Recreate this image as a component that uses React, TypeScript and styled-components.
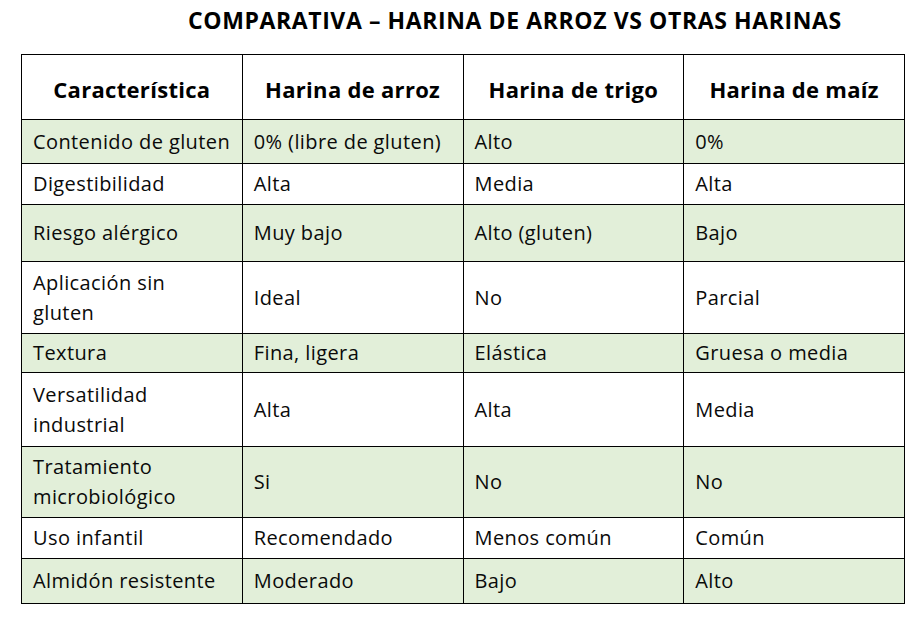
import styled, { createGlobalStyle } from 'styled-components';

const GlobalStyle = createGlobalStyle`
  html, body {
    margin: 0;
    padding: 0;
    background: #ffffff;
  }
  body {
    font-family: "Open Sans", "Noto Sans", "Liberation Sans", sans-serif;
    color: #0a0a0a;
  }
`;

const Page = styled.div`
  width: 924px;
  height: 618px;
  padding: 5px 0 0 21px;
  box-sizing: border-box;
  overflow: hidden;
`;

const Title = styled.h1`
  margin: 0 0 0 167px;
  height: 49px;
  font-size: 23px;
  line-height: 30px;
  font-weight: 700;
  letter-spacing: 0.6px;
  white-space: nowrap;
  color: #000;
`;

const Table = styled.table`
  border-collapse: collapse;
  table-layout: fixed;
  width: 884px;
`;

const Row = styled.tr<{ $h: number; $green?: boolean }>`
  height: ${(p) => p.$h}px;
  background: ${(p) => (p.$green ? '#e2efd9' : '#ffffff')};
`;

const HeadCell = styled.th`
  border: 1px solid #000;
  padding: 3px 4px 0;
  font-size: 22px;
  font-weight: 700;
  letter-spacing: 0.3px;
  text-align: center;
  vertical-align: middle;
  color: #000;
`;

const Cell = styled.td`
  border: 1px solid #000;
  padding: 0 4px 0 11px;
  font-size: 20px;
  line-height: 30px;
  letter-spacing: 0.4px;
  white-space: pre-line;
  text-align: left;
  vertical-align: middle;
  color: #0a0a0a;
`;

type RowData = { h: number; green?: boolean; cells: string[] };

const header = ['Característica', 'Harina de arroz', 'Harina de trigo', 'Harina de maíz'];

const rows: RowData[] = [
  { h: 44, green: true, cells: ['Contenido de gluten', '0% (libre de gluten)', 'Alto', '0%'] },
  { h: 41, cells: ['Digestibilidad', 'Alta', 'Media', 'Alta'] },
  { h: 57, green: true, cells: ['Riesgo alérgico', 'Muy bajo', 'Alto (gluten)', 'Bajo'] },
  { h: 72, cells: ['Aplicación sin\ngluten', 'Ideal', 'No', 'Parcial'] },
  { h: 39, green: true, cells: ['Textura', 'Fina, ligera', 'Elástica', 'Gruesa o media'] },
  { h: 74, cells: ['Versatilidad\nindustrial', 'Alta', 'Alta', 'Media'] },
  { h: 71, green: true, cells: ['Tratamiento\nmicrobiológico', 'Si', 'No', 'No'] },
  { h: 41, cells: ['Uso infantil', 'Recomendado', 'Menos común', 'Común'] },
  { h: 45, green: true, cells: ['Almidón resistente', 'Moderado', 'Bajo', 'Alto'] },
];

export default function App() {
  return (
    <>
      <GlobalStyle />
      <Page>
        <Title>COMPARATIVA – HARINA DE ARROZ VS OTRAS HARINAS</Title>
        <Table>
          <thead>
            <Row $h={65}>
              {header.map((h) => (
                <HeadCell key={h}>{h}</HeadCell>
              ))}
            </Row>
          </thead>
          <tbody>
            {rows.map((r) => (
              <Row key={r.cells[0]} $h={r.h} $green={r.green}>
                {r.cells.map((c, i) => (
                  <Cell key={i}>{c}</Cell>
                ))}
              </Row>
            ))}
          </tbody>
        </Table>
      </Page>
    </>
  );
}
